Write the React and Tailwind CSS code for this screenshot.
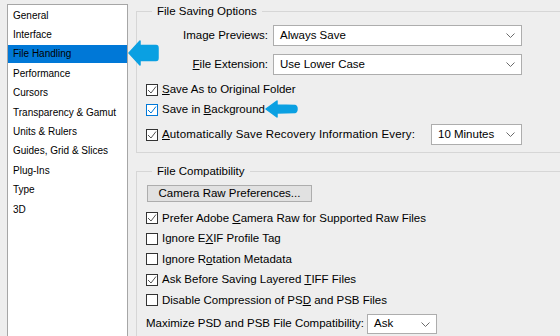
import React from "react";

const categories = [
  "General",
  "Interface",
  "File Handling",
  "Performance",
  "Cursors",
  "Transparency & Gamut",
  "Units & Rulers",
  "Guides, Grid & Slices",
  "Plug-Ins",
  "Type",
  "3D",
];

function Chevron() {
  return (
    <svg width="9" height="5" viewBox="0 0 9 5" className="shrink-0">
      <polyline points="0.5,0.5 4.5,4.5 8.5,0.5" fill="none" stroke="#6b6b6b" strokeWidth="1" />
    </svg>
  );
}

function Select({ value, className }) {
  return (
    <div
      className={`flex items-center justify-between bg-white border border-[#adadad] pl-[6px] pr-[6px] ${className}`}
    >
      <span>{value}</span>
      <Chevron />
    </div>
  );
}

function Checkbox({ checked, focused }) {
  const border = focused ? "border-[#0078d7]" : "border-[#333333]";
  const stroke = focused ? "#0078d7" : "#555555";
  return (
    <div className={`w-[12px] h-[12px] bg-white border ${border} shrink-0 flex items-center justify-center`}>
      {checked && (
        <svg width="10" height="10" viewBox="0 0 10 10">
          <polyline points="1,5 4,8 9,1.5" fill="none" stroke={stroke} strokeWidth="1" />
        </svg>
      )}
    </div>
  );
}

function CheckRow({ checked, focused, children, className = "" }) {
  return (
    <div className={`flex items-center pl-[9px] ${className}`}>
      <Checkbox checked={checked} focused={focused} />
      <span className="ml-[4px] whitespace-nowrap">{children}</span>
    </div>
  );
}

function BlueArrow({ className, w, h, d }) {
  return (
    <svg width={w} height={h} viewBox={`0 0 ${w} ${h}`} className={`absolute ${className}`}>
      <path d={d} fill="#0aa0e2" stroke="#0aa0e2" strokeWidth="1.5" strokeLinejoin="round" />
    </svg>
  );
}

export default function App() {
  return (
    <div className="relative w-[560px] h-[336px] overflow-hidden bg-[#eeeeee] text-black font-['Liberation_Sans',Arial,sans-serif] flex items-start">
      {/* category list */}
      <div className="ml-[7px] mt-[4px] w-[121px] h-[340px] shrink-0 bg-white border border-[#a6a6a6] pt-[1px] text-[10px]">
        {categories.map((item) => (
          <div
            key={item}
            className={`h-[18px] mb-[1.43px] flex items-center pl-[5px] whitespace-nowrap ${
              item === "File Handling" ? "bg-[#0078d7]" : ""
            }`}
          >
            {item}
          </div>
        ))}
      </div>

      {/* options */}
      <div className="ml-[8px] mt-[4px] w-[440px] shrink-0 text-[11.5px]">
        <fieldset className="border border-[#d6d6d6] pb-[7px]">
          <legend className="ml-[15px] px-[5px] leading-[14px]">File Saving Options</legend>

          <div className="flex items-center mt-[7px]">
            <span className="w-[131px] text-right whitespace-nowrap">
              Ima<span className="underline">g</span>e Previews:
            </span>
            <Select value="Always Save" className="ml-[5px] w-[249px] h-[21px]" />
          </div>
          <div className="flex items-center mt-[8px]">
            <span className="w-[131px] text-right whitespace-nowrap">
              <span className="underline">F</span>ile Extension:
            </span>
            <Select value="Use Lower Case" className="ml-[5px] w-[249px] h-[21px]" />
          </div>

          <CheckRow checked className="mt-[5px] h-[20px]">
            <span className="underline">S</span>ave As to Original Folder
          </CheckRow>
          <CheckRow checked focused className="h-[20px]">
            Save in <span className="underline">B</span>ackground
          </CheckRow>
          <div className="flex items-center pl-[9px] mt-[4px] h-[21px]">
            <Checkbox checked />
            <span className="ml-[4px] w-[269px] whitespace-nowrap tracking-[0.15px]">
              <span className="underline">A</span>utomatically Save Recovery Information Every:
            </span>
            <Select value="10 Minutes" className="w-[91px] h-[21px]" />
          </div>
        </fieldset>

        <fieldset className="border border-[#d6d6d6] mt-[11px] pb-[10px]">
          <legend className="ml-[15px] px-[5px] leading-[14px]">File Compatibility</legend>

          <div className="ml-[10px] mt-[7px] w-[165px] h-[17px] bg-[#e1e1e1] border border-[#adadad] flex items-center justify-center">
            Camera Raw Preferences...
          </div>

          <div className="mt-[6px]">
            <CheckRow checked className="h-[20.5px]">
              Prefer Adobe <span className="underline">C</span>amera Raw for Supported Raw Files
            </CheckRow>
            <CheckRow className="h-[20.5px]">
              Ignore E<span className="underline">X</span>IF Profile Tag
            </CheckRow>
            <CheckRow className="h-[20.5px]">
              Ignore R<span className="underline">o</span>tation Metadata
            </CheckRow>
            <CheckRow checked className="h-[20.5px]">
              Ask Before Saving Layered <span className="underline">T</span>IFF Files
            </CheckRow>
            <CheckRow className="h-[20.5px]">
              Disable Compression of PS<span className="underline">D</span> and PSB Files
            </CheckRow>
          </div>

          <div className="flex items-center pl-[9px] mt-[3.5px] h-[20px]">
            <span className="w-[221px] whitespace-nowrap">Maximize PSD and PSB File Compatibility:</span>
            <Select value="Ask" className="w-[70px] h-[20px]" />
          </div>
        </fieldset>
      </div>

      {/* callout arrows */}
      <BlueArrow
        className="left-[128px] top-[40px]"
        w={31}
        h={26}
        d="M1,13 L12,1 L12,5.5 L28,5.5 Q30,5.5 30,8 L30,18 Q30,20.5 28,20.5 L12,20.5 L12,25 Z"
      />
      <BlueArrow
        className="left-[265px] top-[100px]"
        w={33}
        h={18}
        d="M1,9 L12,1 L12,5 L30,5.5 Q32,6 32,9 Q32,12 30,12.5 L12,13 L12,17 Z"
      />
    </div>
  );
}
